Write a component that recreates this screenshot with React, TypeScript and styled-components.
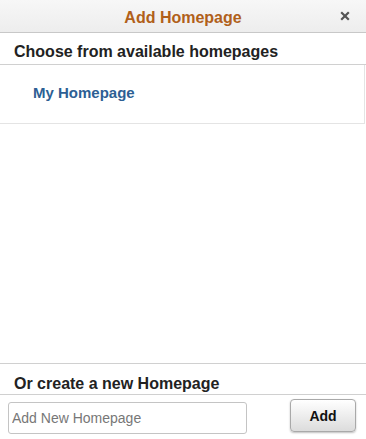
import styled, { createGlobalStyle } from 'styled-components';

const GlobalStyle = createGlobalStyle`
  html, body, #root {
    margin: 0;
    padding: 0;
    height: 100%;
  }
  body {
    font-family: "Liberation Sans", Arial, sans-serif;
    background: #ffffff;
  }
`;

const homepages = ['My Homepage'];

const App = () => {
  return (
    <>
      <GlobalStyle />
      <Dialog>
        <Header>
          <Title>Add Homepage</Title>
          <CloseButton aria-label="close">
            <svg width="10" height="10" viewBox="0 0 10 10">
              <path d="M1.2 1.2 L8.8 8.8 M8.8 1.2 L1.2 8.8" stroke="#555" strokeWidth="2.2" strokeLinecap="butt" />
            </svg>
          </CloseButton>
        </Header>
        <SectionTitle>Choose from available homepages</SectionTitle>
        <List>
          {homepages.map((name) => (
            <ListItem key={name}>{name}</ListItem>
          ))}
        </List>
        <Spacer />
        <BottomTitle>Or create a new Homepage</BottomTitle>
        <CreateRow>
          <NameInput placeholder="Add New Homepage" />
          <AddButton>Add</AddButton>
        </CreateRow>
      </Dialog>
    </>
  );
};

export default App;

const Dialog = styled.div`
  display: flex;
  flex-direction: column;
  height: 439px;
  width: 366px;
  overflow: hidden;
`;

const Header = styled.div`
  position: relative;
  display: flex;
  justify-content: center;
  align-items: flex-start;
  height: 33px;
  padding-top: 9px;
  background: linear-gradient(#f7f7f7, #ededed);
  border-bottom: 1px solid #c8c8c8;
  box-sizing: border-box;
`;

const Title = styled.div`
  color: #b0601a;
  font-size: 16px;
  line-height: 18px;
  font-weight: bold;
`;

const CloseButton = styled.button`
  position: absolute;
  right: 16px;
  top: 11px;
  padding: 0;
  border: none;
  background: none;
  display: flex;
`;

const SectionTitle = styled.div`
  padding: 10px 14px 0;
  height: 32px;
  box-sizing: border-box;
  color: #222;
  font-size: 16px;
  line-height: 18px;
  font-weight: bold;
  border-bottom: 1px solid #d0d0d0;
`;

const List = styled.div`
  display: flex;
  flex-direction: column;
  margin-right: 1px;
  border-right: 1px solid #e4e4e4;
  border-bottom: 1px solid #e4e4e4;
`;

const ListItem = styled.div`
  height: 58px;
  padding: 19px 0 0 33px;
  box-sizing: border-box;
  color: #2d5f94;
  font-size: 15px;
  line-height: 17px;
  font-weight: bold;
`;

const Spacer = styled.div`
  flex: 1;
  border-bottom: 1px solid #d0d0d0;
`;

const BottomTitle = styled.div`
  height: 31px;
  padding: 11px 14px 0;
  box-sizing: border-box;
  color: #222;
  font-size: 16px;
  line-height: 18px;
  font-weight: bold;
  border-bottom: 1px solid #d0d0d0;
`;

const CreateRow = styled.div`
  display: flex;
  align-items: flex-start;
  justify-content: space-between;
  height: 44px;
  padding: 4px 10px 0 8px;
  box-sizing: border-box;
`;

const NameInput = styled.input`
  margin-top: 3px;
  width: 239px;
  height: 32px;
  box-sizing: border-box;
  border: 1px solid #c4c4c4;
  border-radius: 3px;
  padding: 0 3px;
  font-family: "Liberation Sans", Arial, sans-serif;
  font-size: 14px;
  color: #333;
  &::placeholder {
    color: #777;
  }
`;

const AddButton = styled.button`
  width: 66px;
  height: 33px;
  border: 1px solid #a9a9a9;
  border-radius: 4px;
  background: linear-gradient(#ffffff, #dcdcdc);
  box-shadow: 0 1px 2px rgba(0, 0, 0, 0.25);
  font-family: "Liberation Sans", Arial, sans-serif;
  font-size: 14px;
  font-weight: bold;
  color: #111;
`;
